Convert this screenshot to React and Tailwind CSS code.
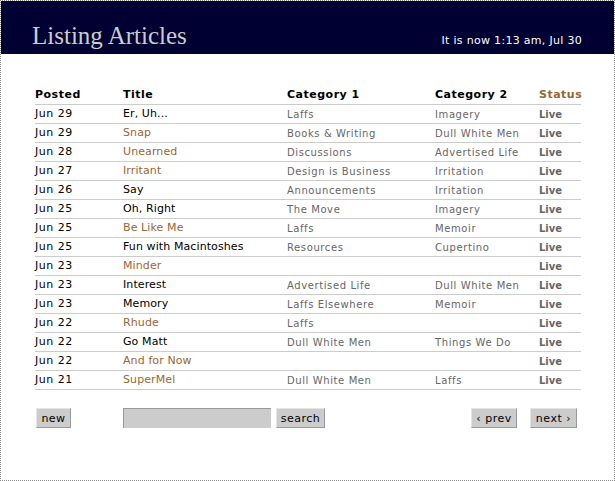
import React from 'react'

const rows = [
  { date: 'Jun 29', title: 'Er, Uh...', link: false, cat1: 'Laffs', cat2: 'Imagery' },
  { date: 'Jun 29', title: 'Snap', link: true, cat1: 'Books & Writing', cat2: 'Dull White Men' },
  { date: 'Jun 28', title: 'Unearned', link: true, cat1: 'Discussions', cat2: 'Advertised Life' },
  { date: 'Jun 27', title: 'Irritant', link: true, cat1: 'Design is Business', cat2: 'Irritation' },
  { date: 'Jun 26', title: 'Say', link: false, cat1: 'Announcements', cat2: 'Irritation' },
  { date: 'Jun 25', title: 'Oh, Right', link: false, cat1: 'The Move', cat2: 'Imagery' },
  { date: 'Jun 25', title: 'Be Like Me', link: true, cat1: 'Laffs', cat2: 'Memoir' },
  { date: 'Jun 25', title: 'Fun with Macintoshes', link: false, cat1: 'Resources', cat2: 'Cupertino' },
  { date: 'Jun 23', title: 'Minder', link: true, cat1: '', cat2: '' },
  { date: 'Jun 23', title: 'Interest', link: false, cat1: 'Advertised Life', cat2: 'Dull White Men' },
  { date: 'Jun 23', title: 'Memory', link: false, cat1: 'Laffs Elsewhere', cat2: 'Memoir' },
  { date: 'Jun 22', title: 'Rhude', link: true, cat1: 'Laffs', cat2: '' },
  { date: 'Jun 22', title: 'Go Matt', link: false, cat1: 'Dull White Men', cat2: 'Things We Do' },
  { date: 'Jun 22', title: 'And for Now', link: true, cat1: '', cat2: '' },
  { date: 'Jun 21', title: 'SuperMel', link: true, cat1: 'Dull White Men', cat2: 'Laffs' },
]

const cols = 'grid grid-cols-[88px_164px_148px_104px_41px]'

const Button = ({ children, className = '' }) => (
  <button
    className={`h-[20px] bg-[#cccccc] border-t border-l border-t-[#e4e4e4] border-l-[#e4e4e4] border-r border-b border-r-[#999999] border-b-[#999999] text-[11px] tracking-[0.5px] text-black leading-none ${className}`}
  >
    {children}
  </button>
)

export default function App() {
  return (
    <div
      className="w-[615px] h-[481px] border border-dotted border-[#888888] bg-white text-black overflow-hidden"
      style={{ fontFamily: '"DejaVu Sans", Verdana, sans-serif' }}
    >
      {/* Header */}
      <div className="h-[53px] bg-[#000033] flex items-end justify-between pl-[31px] pr-[32px] pb-[8px]">
        <h1
          className="text-[25px] leading-none text-[#cccccc] mb-[-2px]"
          style={{ fontFamily: '"Liberation Serif", Georgia, serif' }}
        >
          Listing Articles
        </h1>
        <div className="text-[11px] text-white leading-none tracking-[0.3px]">It is now 1:13 am, Jul 30</div>
      </div>

      {/* Table */}
      <div className="pl-[34px] pt-[32px] w-[580px]">
        <div className={`${cols} h-[19px] items-center border-b border-[#cccccc] text-[11px] font-bold tracking-[0.5px]`}>
          <div>Posted</div>
          <div>Title</div>
          <div>Category 1</div>
          <div>Category 2</div>
          <div className="text-[#996633]">Status</div>
        </div>
        {rows.map((r, i) => (
          <div key={i} className={`${cols} h-[19px] items-center border-b border-[#cccccc] text-[11px]`}>
            <div className="tracking-[0.5px]">{r.date}</div>
            <div className={`tracking-[0.1px] ${r.link ? 'text-[#996633]' : 'text-black'}`}>{r.title}</div>
            <div className="text-[10px] tracking-[0.6px] text-[#666666] whitespace-nowrap">{r.cat1}</div>
            <div className="text-[10px] tracking-[0.6px] text-[#666666] whitespace-nowrap">{r.cat2}</div>
            <div className="text-[10px] font-bold text-[#666666]">Live</div>
          </div>
        ))}

        {/* Controls */}
        <div className="flex items-center mt-[18px]">
          <Button className="w-[35px] ml-[1px]">new</Button>
          <div className="ml-[52px] w-[148px] h-[20px] bg-[#cccccc] border-t border-l border-[#999999]" />
          <Button className="w-[49px] ml-[5px]">search</Button>
          <Button className="w-[46px] ml-auto">‹ prev</Button>
          <Button className="w-[47px] ml-[13px] mr-[4px]">next ›</Button>
        </div>
      </div>
    </div>
  )
}
